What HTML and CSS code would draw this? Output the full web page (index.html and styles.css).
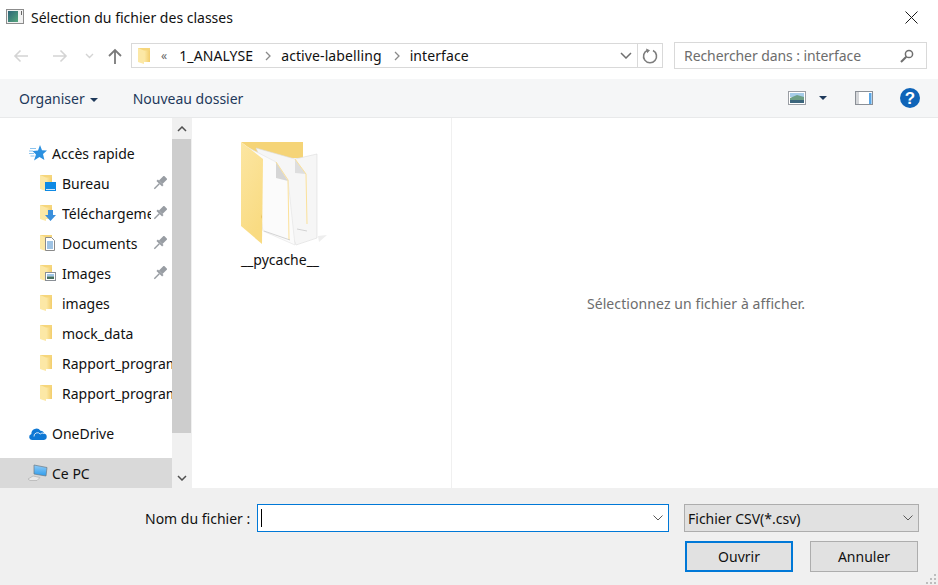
FILE: index.html
```html
<!DOCTYPE html>
<html lang="fr">
<head>
    <meta charset="UTF-8">
    <meta name="viewport" content="width=device-width, initial-scale=1.0">
    <title>Sélection du fichier des classes</title>
    <link rel="stylesheet" href="styles.css">
</head>
<body>
    <svg class="defs" width="0" height="0">
        <defs>
            <linearGradient id="folderFront" x1="0" y1="0" x2="1" y2="0">
                <stop offset="0" stop-color="#fdeaa9"/>
                <stop offset="1" stop-color="#f2cd6c"/>
            </linearGradient>
            <linearGradient id="bigFront" x1="0" y1="0" x2="0.4" y2="1">
                <stop offset="0" stop-color="#fce6a2"/>
                <stop offset="1" stop-color="#f9db82"/>
            </linearGradient>
            <linearGradient id="thumb" x1="0" y1="0" x2="1" y2="1">
                <stop offset="0" stop-color="#2c6478"/>
                <stop offset="1" stop-color="#55a67c"/>
            </linearGradient>
            <linearGradient id="screen" x1="0" y1="0" x2="0" y2="1">
                <stop offset="0" stop-color="#8fcbf7"/>
                <stop offset="1" stop-color="#2e9cec"/>
            </linearGradient>
        </defs>
        <symbol id="folder" viewBox="0 0 14 18">
            <path d="M1 1h12v14H1z" fill="#f6d67c"/>
            <path d="M1 1l6 2.500V17L1 15z" fill="#fce8a6"/>
            <path d="M7 3.500h6V15H7z" fill="url(#folderFront)"/>
        </symbol>
        <symbol id="pin" viewBox="0 0 14 14">
            <g transform="rotate(45 7 7)" fill="#989da3">
                <rect x="4.500" y="-1" width="5" height="7"/>
                <rect x="3" y="6" width="8" height="2"/>
                <rect x="6.300" y="8" width="1.400" height="7"/>
            </g>
        </symbol>
    </svg>

    <header class="titlebar">
        <svg class="app-icon" width="18" height="15" viewBox="0 0 18 15">
            <rect x="0.500" y="0.500" width="17" height="14" fill="#f1f1f1" stroke="#8c8c8c"/>
            <rect x="2" y="2" width="10" height="11" fill="url(#thumb)"/>
            <rect x="15" y="2" width="1" height="4" fill="#666"/>
        </svg>
        <span class="title">Sélection du fichier des classes</span>
        <svg class="close" width="13" height="13" viewBox="0 0 13 13">
            <path d="M.5.500l12 12M12.500.500l-12 12" stroke="#1a1a1a" stroke-width="1" fill="none"/>
        </svg>
    </header>

    <div class="navbar">
        <div class="nav-buttons">
            <svg width="16" height="14" viewBox="0 0 16 14"><path d="M15 7H2M7.500 1.500L2 7l5.500 5.500" stroke="#d4d4d4" stroke-width="1.600" fill="none"/></svg>
            <svg class="nav-forward" width="16" height="14" viewBox="0 0 16 14"><path d="M1 7h13M8.500 1.500L14 7l-5.500 5.500" stroke="#d4d4d4" stroke-width="1.600" fill="none"/></svg>
            <svg class="nav-recent" width="9" height="6" viewBox="0 0 9 6"><path d="M1 1l3.500 3.500L8 1" stroke="#d4d4d4" stroke-width="1.400" fill="none"/></svg>
            <svg class="nav-up" width="14" height="16" viewBox="0 0 14 16"><path d="M7 16V2M1 8l6-6 6 6" stroke="#7a7a7a" stroke-width="1.800" fill="none"/></svg>
        </div>
        <div class="address">
            <svg width="14" height="18"><use href="#folder"/></svg>
            <span class="crumb-more">«</span>
            <span>1_ANALYSE</span>
            <svg class="crumb-sep" width="6" height="10" viewBox="0 0 6 10"><path d="M1 1l4 4-4 4" stroke="#8a8a8a" stroke-width="1.300" fill="none"/></svg>
            <span>active-labelling</span>
            <svg class="crumb-sep" width="6" height="10" viewBox="0 0 6 10"><path d="M1 1l4 4-4 4" stroke="#8a8a8a" stroke-width="1.300" fill="none"/></svg>
            <span>interface</span>
            <svg class="address-drop" width="12" height="7" viewBox="0 0 12 7"><path d="M1 1l5 5 5-5" stroke="#6f6f6f" stroke-width="1.500" fill="none"/></svg>
            <div class="refresh">
                <svg width="16" height="16" viewBox="0 0 16 16"><path d="M5.500 2.300A6.500 6.500 0 1 0 11 2.500" stroke="#7d7d7d" stroke-width="1.600" fill="none"/><path d="M4 .5l4 1.800-2.800 3z" fill="#7d7d7d"/></svg>
            </div>
        </div>
        <div class="search">
            <span>Rechercher dans : interface</span>
            <svg width="14" height="14" viewBox="0 0 14 14"><circle cx="9" cy="5" r="3.600" stroke="#6f6f6f" stroke-width="1.500" fill="none"/><path d="M6.300 7.700L1 13" stroke="#6f6f6f" stroke-width="2"/></svg>
        </div>
    </div>

    <div class="toolbar">
        <span class="tool-button">Organiser<i class="caret"></i></span>
        <span class="tool-button new-folder">Nouveau dossier</span>
        <div class="tool-right">
            <svg width="18" height="14" viewBox="0 0 18 14"><rect x="0.500" y="0.500" width="17" height="13" fill="#fff" stroke="#9a9ea4"/><rect x="2" y="2" width="14" height="4" fill="#a6cde9"/><path d="M2 7l7-3 7 2v3H2z" fill="#6d9f86"/><rect x="2" y="9" width="14" height="3" fill="#3b657c"/></svg>
            <i class="caret view-caret"></i>
            <svg class="pane-icon" width="18" height="14" viewBox="0 0 18 14"><rect x="0.500" y="0.500" width="17" height="13" fill="#fff" stroke="#8a8f96"/><rect x="1" y="1" width="3" height="12" fill="#d4d6d9"/><rect x="14" y="2" width="2.500" height="11" fill="#5aa6e6"/></svg>
            <svg class="help-icon" width="20" height="20" viewBox="0 0 20 20"><circle cx="10" cy="10" r="10" fill="#0f64b8"/><text x="10" y="16" text-anchor="middle" class="help-mark">?</text></svg>
        </div>
    </div>

    <main class="main">
        <nav class="sidebar">
            <ul class="tree">
                <li class="row top">
                    <svg width="18" height="16" viewBox="0 0 18 16"><path d="M11 0l2 5.300 5 .3-4 3.400 1.400 6L10.500 12 5 15.500 7 9.500 3.500 6l5.500-.6z" fill="#2a90e0"/><path d="M1 3.500h6M0 6h4M0 8.500h5M1.500 11h4" stroke="#8cc4ee" stroke-width="1"/></svg>
                    <span>Accès rapide</span>
                </li>
                <li class="row sub">
                    <span class="folder-icon">
                        <svg width="14" height="18"><use href="#folder"/></svg>
                        <svg class="badge" width="11" height="9" viewBox="0 0 11 9"><rect width="11" height="9" fill="#0f8ae4"/><rect x="1" y="7" width="9" height="1" fill="#cfe8fb"/></svg>
                    </span>
                    <span class="name">Bureau</span>
                    <svg class="pin" width="14" height="14"><use href="#pin"/></svg>
                </li>
                <li class="row sub">
                    <span class="folder-icon">
                        <svg width="14" height="18"><use href="#folder"/></svg>
                        <svg class="badge" width="11" height="11" viewBox="0 0 11 11"><path d="M3 0h5v5h3l-5.500 6L0 5h3z" fill="#3a8fdc"/></svg>
                    </span>
                    <span class="name">Téléchargements</span>
                    <svg class="pin" width="14" height="14"><use href="#pin"/></svg>
                </li>
                <li class="row sub">
                    <span class="folder-icon">
                        <svg width="14" height="18"><use href="#folder"/></svg>
                        <svg class="badge" width="10" height="14" viewBox="0 0 10 14"><path d="M.5.500h6l3 3v10H.5z" fill="#fff" stroke="#8a8a8a"/><path d="M2 5h6M2 7h6M2 9h6M2 11h6" stroke="#3f87c9"/></svg>
                    </span>
                    <span class="name">Documents</span>
                    <svg class="pin" width="14" height="14"><use href="#pin"/></svg>
                </li>
                <li class="row sub">
                    <span class="folder-icon">
                        <svg width="14" height="18"><use href="#folder"/></svg>
                        <svg class="badge" width="11" height="9" viewBox="0 0 11 9"><rect x="0.500" y="0.500" width="10" height="8" fill="#fff" stroke="#8a8f96"/><rect x="2" y="2" width="7" height="2.500" fill="#9fc6e8"/><rect x="2" y="4.500" width="7" height="2.500" fill="#47705f"/></svg>
                    </span>
                    <span class="name">Images</span>
                    <svg class="pin" width="14" height="14"><use href="#pin"/></svg>
                </li>
                <li class="row sub">
                    <span class="folder-icon"><svg width="14" height="18"><use href="#folder"/></svg></span>
                    <span class="name">images</span>
                </li>
                <li class="row sub">
                    <span class="folder-icon"><svg width="14" height="18"><use href="#folder"/></svg></span>
                    <span class="name">mock_data</span>
                </li>
                <li class="row sub">
                    <span class="folder-icon"><svg width="14" height="18"><use href="#folder"/></svg></span>
                    <span class="name">Rapport_programme</span>
                </li>
                <li class="row sub">
                    <span class="folder-icon"><svg width="14" height="18"><use href="#folder"/></svg></span>
                    <span class="name">Rapport_programme</span>
                </li>
                <li class="row top group">
                    <svg width="18" height="13" viewBox="0 0 18 13"><path d="M3 13a3 3 0 0 1-.6-5.900A5 5 0 0 1 11.500 3.800a3.400 3.400 0 0 1 3.500 2.700A3.300 3.300 0 0 1 15 13z" fill="#0f78d4"/><path d="M5 9.500a3.500 3.500 0 0 1 6.200-2.500 3 3 0 0 1 3.800-.5" stroke="#fff" stroke-width="0.800" fill="none"/></svg>
                    <span>OneDrive</span>
                </li>
                <li class="row top group selected">
                    <svg width="18" height="16" viewBox="0 0 18 16"><path d="M5 0l13 2.500-1 8.500-12-2z" fill="url(#screen)" stroke="#6b7a85" stroke-width="0.700"/><path d="M-1 14l5-3 7 1.500-3 3H1z" fill="#e9e9e9" stroke="#b0b0b0" stroke-width="0.700"/></svg>
                    <span>Ce PC</span>
                </li>
            </ul>
            <div class="scrollbar">
                <div class="scroll-btn">
                    <svg width="10" height="6" viewBox="0 0 10 6"><path d="M1 5l4-4 4 4" stroke="#505050" stroke-width="1.500" fill="none"/></svg>
                </div>
                <div class="scroll-thumb"></div>
                <div class="scroll-track"></div>
                <div class="scroll-btn">
                    <svg width="10" height="6" viewBox="0 0 10 6"><path d="M1 1l4 4 4-4" stroke="#505050" stroke-width="1.500" fill="none"/></svg>
                </div>
            </div>
        </nav>

        <section class="files">
            <div class="file-tile">
                <svg width="90" height="110" viewBox="240 140 90 110">
                    <path d="M318 236l9-1-8 7z" fill="#eeeeee"/>
                    <path d="M241 142h62v16h-40z" fill="#f5d477"/>
                    <path d="M256 148l39 11 22-5v84l-21 7z" fill="#f6f6f6" stroke="#dcdcdc" stroke-width="0.600"/>
                    <path d="M295 159l11 15-11-1z" fill="#dedede"/>
                    <path d="M295 159l11 15 1 50" stroke="#fbe19a" stroke-width="1" fill="none"/>
                    <path d="M297 229l10 2" stroke="#c9c9c9" stroke-width="0.800"/>
                    <path d="M249 148l27 14 12 18 7 65-32-14z" fill="#fbfbfb" stroke="#e2e2e2" stroke-width="0.600"/>
                    <path d="M276 162v16l12 3z" fill="#d6d6d6"/>
                    <path d="M276 162l12 18 1 60" stroke="#fbe19a" stroke-width="1" fill="none"/>
                    <path d="M264 231l26 9" stroke="#c9c9c9" stroke-width="0.800"/>
                    <path d="M241 142l22 17-1 85-21-18z" fill="url(#bigFront)"/>
                    <path d="M262 214l-1 3 1 2z" fill="#e8c25f"/>
                </svg>
                <span class="file-name">__pycache__</span>
            </div>
        </section>

        <aside class="preview">Sélectionnez un fichier à afficher.</aside>
    </main>

    <footer class="footer">
        <label class="file-label" for="fileName">Nom du fichier :</label>
        <div class="file-input">
            <span class="cursor"></span>
            <svg width="10" height="6" viewBox="0 0 10 6"><path d="M.5.500L5 5 9.500.500" stroke="#5a5a5a" fill="none"/></svg>
        </div>
        <div class="file-type">
            <span>Fichier CSV(*.csv)</span>
            <svg width="10" height="6" viewBox="0 0 10 6"><path d="M.5.500L5 5 9.500.500" stroke="#5a5a5a" fill="none"/></svg>
        </div>
        <div class="actions">
            <button type="button" class="btn primary">Ouvrir</button>
            <button type="button" class="btn">Annuler</button>
        </div>
        <svg class="grip" width="11" height="11" viewBox="0 0 11 11">
            <path d="M8 0h2v2H8zM4 4h2v2H4zM8 4h2v2H8zM0 8h2v2H0zM4 8h2v2H4zM8 8h2v2H8z" fill="#bdbdbd"/>
        </svg>
    </footer>
</body>
</html>
```

FILE: styles.css
```css
* {
    box-sizing: border-box;
}
html, body {
    height: 100%;
}
body {
    font-family: "Noto Sans", "Open Sans", sans-serif;
    font-size: 14px;
    background-color: white;
    color: #111;
    margin: 0;
    padding: 0;
    width: 938px;
    height: 585px;
    overflow: hidden;
}
.defs {
    display: block;
    height: 0;
}
svg {
    display: block;
    flex: none;
}

.titlebar {
    height: 34px;
    display: flex;
    align-items: center;
    padding: 0 20px 0 6px;
}
.app-icon {
    margin-bottom: 2px;
}
.title {
    margin-left: 7px;
}
.close {
    margin-left: auto;
}

.navbar {
    height: 45px;
    display: flex;
    align-items: center;
    padding-bottom: 2px;
}
.nav-buttons {
    width: 131px;
    padding-left: 13px;
    display: flex;
    align-items: center;
}
.nav-forward {
    margin-left: 23px;
}
.nav-recent {
    margin-left: 17px;
}
.nav-up {
    margin-left: 14px;
}
.address {
    width: 532px;
    height: 25px;
    border: 1px solid #d9d9d9;
    display: flex;
    align-items: center;
    padding-left: 5px;
    letter-spacing: .1px;
}
.address span {
    margin-right: 12px;
}
.address .crumb-more {
    margin: 0 12px 0 10px;
    color: #666;
    font-size: 12px;
}
.crumb-sep {
    margin-right: 10px;
}
.address-drop {
    margin-left: auto;
    margin-right: 5px;
}
.refresh {
    width: 25px;
    height: 23px;
    border-left: 1px solid #d9d9d9;
    display: flex;
    align-items: center;
    justify-content: center;
}
.search {
    width: 253px;
    height: 27px;
    margin-left: 11px;
    border: 1px solid #d9d9d9;
    display: flex;
    align-items: center;
    justify-content: space-between;
    padding: 0 12px 0 9px;
    color: #6d6d6d;
    letter-spacing: -.08px;
}

.toolbar {
    height: 39px;
    background-color: #f5f6f7;
    border-bottom: 1px solid #e8e9ea;
    display: flex;
    align-items: center;
    padding-left: 19px;
    color: #1e395b;
}
.caret {
    display: inline-block;
    margin-left: 5px;
    vertical-align: middle;
    border-left: 4px solid transparent;
    border-right: 4px solid transparent;
    border-top: 4px solid #1e395b;
}
.new-folder {
    margin-left: 35px;
}
.tool-right {
    margin-left: auto;
    display: flex;
    align-items: center;
    padding-right: 18px;
}
.view-caret {
    margin-left: 13px;
}
.pane-icon {
    margin-left: 28px;
}
.help-icon {
    margin-left: 27px;
}
.help-mark {
    font-family: "Liberation Sans", sans-serif;
    font-size: 17px;
    font-weight: bold;
    fill: white;
}

.main {
    height: 370px;
    display: flex;
}
.sidebar {
    width: 192px;
    display: flex;
    border-right: 1px solid #f0f0f0;
}
.tree {
    width: 172px;
    list-style: none;
    margin: 0;
    padding: 20px 0 0;
    overflow: hidden;
}
.row {
    height: 30px;
    display: flex;
    align-items: center;
    white-space: nowrap;
    overflow: hidden;
}
.row > svg {
    overflow: visible;
}
.top {
    padding-left: 29px;
    gap: 5px;
}
.group {
    margin-top: 10px;
}
.sub {
    padding-left: 39px;
}
.folder-icon {
    position: relative;
    flex: none;
}
.badge {
    position: absolute;
    left: 6px;
    bottom: 1px;
}
.name {
    margin-left: 9px;
    min-width: 0;
    overflow: hidden;
}
.row .pin {
    margin-left: 2px;
    margin-right: 5px;
}
.name:nth-last-child(2) {
    flex: 1;
}
.selected {
    background-color: #d9d9d9;
}
.scrollbar {
    width: 19px;
    display: flex;
    flex-direction: column;
    background-color: #f0f0f0;
}
.scroll-btn {
    height: 21px;
    display: flex;
    align-items: center;
    justify-content: center;
}
.scroll-thumb {
    height: 294px;
    background-color: #cdcdcd;
}
.scroll-track {
    flex: 1;
}

.files {
    width: 260px;
    border-right: 1px solid #f0f0f0;
    padding: 22px 0 0 48px;
}
.file-tile {
    width: 90px;
    display: flex;
    flex-direction: column;
    align-items: center;
}
.file-name {
    margin-left: -10px;
}
.preview {
    flex: 1;
    display: flex;
    align-items: center;
    justify-content: center;
    padding-left: 2px;
    color: #6d6d6d;
    letter-spacing: .09px;
}

.footer {
    position: relative;
    height: 97px;
    background-color: #f0f0f0;
    display: grid;
    grid-template-columns: 145px 106px 418px 235px;
    grid-template-rows: 28px 31px;
    row-gap: 9px;
    padding-top: 16px;
}
.file-label {
    grid-column: 2;
    display: flex;
    align-items: center;
    white-space: nowrap;
}
.file-input {
    grid-column: 3;
    margin-left: 6px;
    background-color: white;
    border: 1px solid #0078d7;
    display: flex;
    align-items: center;
    justify-content: space-between;
    padding: 0 5px 0 3px;
}
.cursor {
    width: 1px;
    height: 18px;
    background-color: black;
}
.file-type {
    grid-column: 4;
    margin-left: 15px;
    width: 235px;
    background-color: #e1e1e1;
    border: 1px solid #adadad;
    display: flex;
    align-items: center;
    justify-content: space-between;
    padding: 0 5px 0 3px;
}
.actions {
    grid-column: 4;
    grid-row: 2;
    margin-left: 16px;
    display: flex;
    gap: 17px;
    width: 233px;
}
.btn {
    width: 108px;
    height: 31px;
    font-family: inherit;
    font-size: 14px;
    color: #111;
    background-color: #e1e1e1;
    border: 1px solid #adadad;
    padding: 0;
}
.btn.primary {
    border: 2px solid #0078d7;
}
.grip {
    position: absolute;
    right: 1px;
    bottom: 0;
}
```
